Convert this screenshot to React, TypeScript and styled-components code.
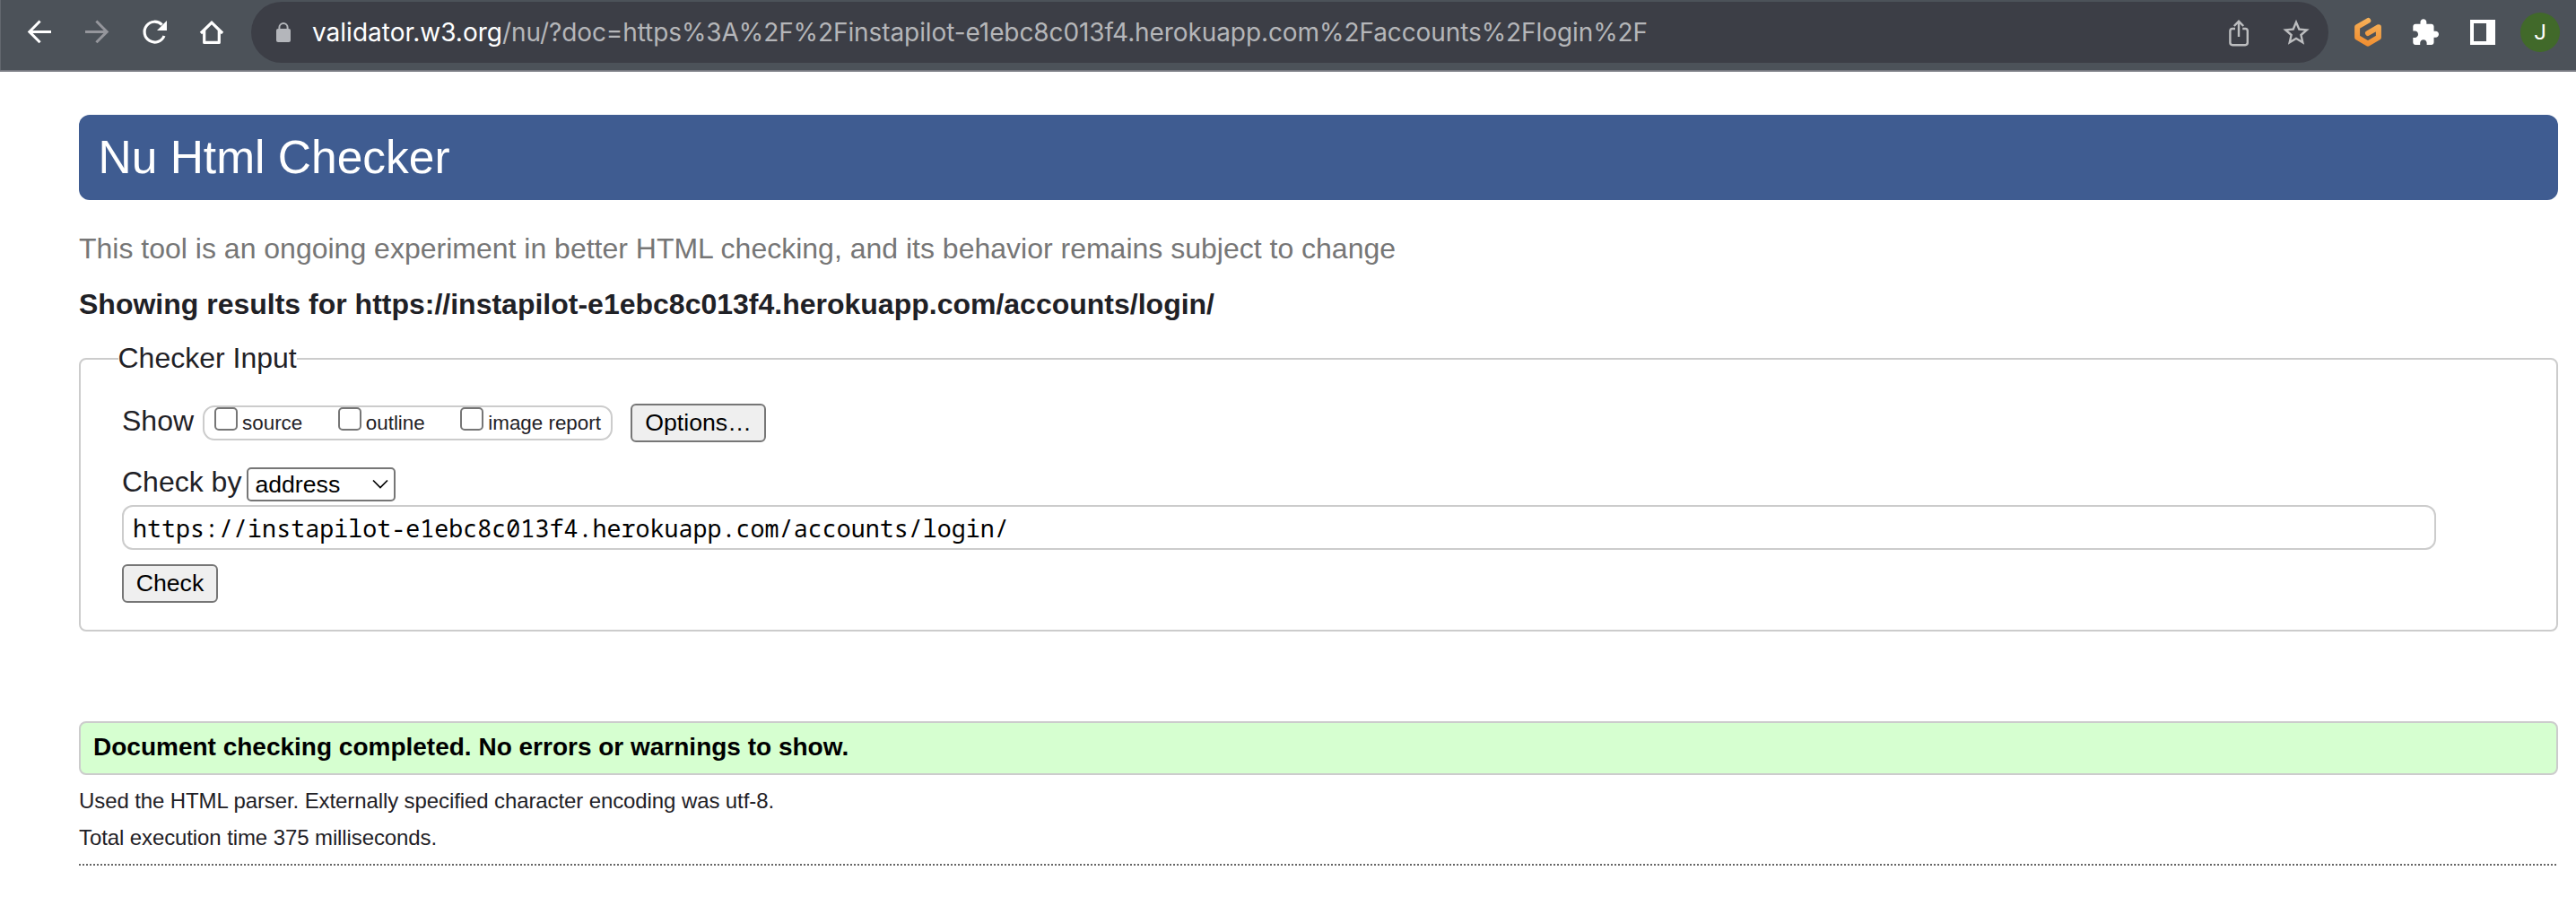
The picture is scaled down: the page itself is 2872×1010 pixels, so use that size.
import React from "react";
import styled, { createGlobalStyle } from "styled-components";

const sans = `"Liberation Sans", Arial, Helvetica, sans-serif`;
const ui = `Inter, Roboto, sans-serif`;
const mono = `"Noto Sans Mono", "DejaVu Sans Mono", monospace`;

const GlobalStyle = createGlobalStyle`
  *, *::before, *::after { box-sizing: border-box; }
  body { margin: 0; background: #fff; color: #1f2126; font-family: ${sans}; }
`;

/* Browser toolbar */

const Toolbar = styled.header`
  display: flex;
  align-items: center;
  height: 80px;
  padding: 2px 18px 8px 24px;
  background: #4c5259;
  border-bottom: 2px solid #777981;
  box-shadow: inset 1px 0 0 #62676e;
`;

const IconGroup = styled.div`
  display: flex;
  align-items: center;
  gap: 24px;
`;

const Glyph = styled.svg<{ $color?: string }>`
  flex: none;
  display: block;
  width: 40px;
  height: 40px;
  color: ${(p) => p.$color ?? "#fff"};
`;

const Omnibox = styled.div`
  flex: 1;
  display: flex;
  align-items: center;
  height: 68px;
  margin: 0 24px;
  padding: 0 16px;
  border-radius: 34px;
  background: #3c3e46;
`;

const Url = styled.div`
  flex: 1;
  margin-left: 12px;
  font: 28px/40px ${ui};
  letter-spacing: -0.09px;
  color: #b5b6b9;
  white-space: nowrap;
`;

const Host = styled.span`
  letter-spacing: 0;
  color: #fff;
`;

const Avatar = styled.div`
  display: flex;
  align-items: center;
  justify-content: center;
  width: 44px;
  height: 44px;
  margin-left: 22px;
  border-radius: 50%;
  background: #41692a;
  color: #fff;
  font: 24px/44px Roboto, sans-serif;
`;

/* Page */

const Page = styled.main`
  display: flex;
  flex-direction: column;
  padding: 48px 20px 0 88px;
`;

const Banner = styled.h1`
  margin: 0;
  height: 95px;
  padding: 0 21.5px;
  border-radius: 12px;
  background: #3f5c91;
  color: #fff;
  font-size: 51.5px;
  font-weight: 400;
  line-height: 94px;
`;

const Notice = styled.p`
  margin: 36px 0 0;
  font-size: 32px;
  line-height: 36px;
  color: #767676;
`;

const ResultsTitle = styled.h2`
  margin: 26px 0 0;
  font-size: 32px;
  line-height: 36px;
`;

const Panel = styled.fieldset`
  min-width: 0;
  height: 323px;
  margin: 24px 0 0;
  padding: 0;
  border: 2px solid #ccc;
  border-radius: 8px;
`;

const PanelTitle = styled.legend`
  margin-left: 41.5px;
  padding: 0 0 2px;
  font-size: 32px;
  line-height: 36px;
`;

const PanelBody = styled.div`
  display: flex;
  flex-direction: column;
  align-items: flex-start;
  padding: 31px 134px 0 46px;
`;

const Row = styled.div<{ $top?: number }>`
  display: flex;
  align-items: center;
  margin-top: ${(p) => p.$top ?? 0}px;
`;

const RowLabel = styled.span<{ $gap: number }>`
  margin-right: ${(p) => p.$gap}px;
  padding-bottom: 5px;
  font-size: 32px;
  line-height: 33px;
  white-space: nowrap;
`;

const CheckGroup = styled.div`
  display: flex;
  gap: 39.5px;
  width: 457px;
  height: 39px;
  padding-left: 11px;
  margin-right: 20px;
  border: 2px solid #ccc;
  border-radius: 13px;
`;

const CheckLabel = styled.label`
  display: flex;
  gap: 5px;
  font-size: 22.4px;
  line-height: 35px;
  white-space: nowrap;
`;

const CheckBox = styled.input`
  appearance: none;
  width: 26px;
  height: 26px;
  margin: 0;
  border: 2px solid #767676;
  border-radius: 5px;
  background: #fff;
`;

const Button = styled.button<{ $width: number; $top?: number }>`
  width: ${(p) => p.$width}px;
  height: 43px;
  margin: ${(p) => p.$top ?? 0}px 0 0;
  padding: 0 0 1px;
  border: 2px solid #767676;
  border-radius: 6px;
  background: #efefef;
  color: #000;
  font: 26.67px/38px ${sans};
`;

const SelectWrap = styled.div`
  display: grid;
  align-items: center;
  width: 166px;
  height: 38px;

  & > * {
    grid-area: 1 / 1;
  }
`;

const Select = styled.select`
  appearance: none;
  width: 100%;
  height: 38px;
  padding: 0 0 0 7px;
  border: 2px solid #767676;
  border-radius: 5px;
  background: #fff;
  color: #000;
  font: 26.67px/34px ${sans};
`;

const Chevron = styled.svg`
  justify-self: end;
  width: 18px;
  height: 12px;
  margin-right: 8px;
  pointer-events: none;
`;

const AddressInput = styled.input`
  width: 100%;
  height: 50px;
  margin: 4px 0 0;
  padding: 0 10px;
  border: 2px solid #ccc;
  border-radius: 12px;
  background: #fff;
  color: #000;
  font: 26.67px/46px ${mono};
  letter-spacing: 0.02px;
`;

const Success = styled.p`
  height: 60px;
  margin: 100px 0 0;
  padding: 0 14px;
  border: 2px solid #ccc;
  border-radius: 8px;
  background: #d6ffd0;
  color: #000;
  font-size: 28px;
  font-weight: 700;
  line-height: 54px;
`;

const Detail = styled.p<{ $top: number }>`
  margin: ${(p) => p.$top}px 0 0;
  font-size: 24px;
  line-height: 30px;
  letter-spacing: -0.1px;
`;

const Divider = styled.div`
  height: 2px;
  margin-top: 14px;
  background: repeating-linear-gradient(90deg, #666 0 2px, transparent 2px 4px);
`;

const checks = ["source", "outline", "image report"];

const BackIcon = () => (
  <Glyph viewBox="0 0 40 40" fill="none" stroke="currentColor" strokeWidth="3">
    <path d="M33 19.4H9M20.6 7.5L8.8 19.4l11.8 11.9" />
  </Glyph>
);

const ForwardIcon = () => (
  <Glyph viewBox="0 0 40 40" fill="none" stroke="currentColor" strokeWidth="3" $color="#95969c">
    <path d="M7 19.4h24M19.4 7.5l11.8 11.9-11.8 11.9" />
  </Glyph>
);

const ReloadIcon = () => (
  <Glyph viewBox="0 0 40 40">
    <path
      d="M28.6 11.6A11.4 11.4 0 1 0 31 24"
      fill="none"
      stroke="currentColor"
      strokeWidth="3.2"
    />
    <path d="M34 7v11H23z" fill="currentColor" />
  </Glyph>
);

const HomeIcon = () => (
  <Glyph viewBox="0 0 40 40" fill="none" stroke="currentColor" strokeWidth="3.2">
    <path d="M7.9 21L20 9.2 32.1 21" />
    <path d="M11.7 18v13.4h16.6V18" strokeLinejoin="round" />
  </Glyph>
);

const LockIcon = () => (
  <Glyph viewBox="0 0 40 40" $color="#b4b6bb">
    <rect x="12" y="16" width="16" height="15" rx="2" fill="currentColor" />
    <path d="M15.4 17v-2.4a4.6 4.6 0 0 1 9.2 0V17" fill="none" stroke="currentColor" strokeWidth="2" />
  </Glyph>
);

const ShareIcon = () => (
  <Glyph viewBox="0 0 40 40" fill="none" stroke="currentColor" strokeWidth="2.4" $color="#bcbdbf">
    <path d="M16 16h-3a2.6 2.6 0 0 0-2.6 2.6v13A2.6 2.6 0 0 0 13 34.2h14.2a2.6 2.6 0 0 0 2.6-2.6v-13a2.6 2.6 0 0 0-2.6-2.6h-3" />
    <path d="M20 25V8.5M14.8 13L20 7.8l5.2 5.2" />
  </Glyph>
);

const StarIcon = () => (
  <Glyph viewBox="-1.6 -1.95 27.2 27.2" fill="currentColor" $color="#bcbdbf">
    <path d="M22 9.24l-7.19-.62L12 2 9.19 8.63 2 9.24l5.46 4.73L5.82 21 12 17.27 18.18 21l-1.63-7.03L22 9.24zM12 15.4l-3.76 2.27 1-4.28-3.32-2.88 4.38-.38L12 6.1l1.71 4.04 4.38.38-3.32 2.88 1 4.28L12 15.4z" />
  </Glyph>
);

const GitpodIcon = () => (
  <Glyph viewBox="0 0 40 40">
    <defs>
      <linearGradient id="gitpod" gradientUnits="userSpaceOnUse" x1="24" y1="4" x2="16" y2="36">
        <stop offset="0" stopColor="#f6b35c" />
        <stop offset="1" stopColor="#f08c2e" />
      </linearGradient>
    </defs>
    <path
      d="M20.3 7L8.1 14v11.700L20 32.700l11.900-7V14.200L20 21"
      fill="none"
      stroke="url(#gitpod)"
      strokeWidth="6"
      strokeLinecap="round"
      strokeLinejoin="round"
    />
  </Glyph>
);

const ExtensionsIcon = () => (
  <Glyph viewBox="-2.6 -2.8 29.26 29.26" fill="currentColor">
    <path d="M20.5 11H19V7c0-1.1-.9-2-2-2h-4V3.5C13 2.12 11.88 1 10.5 1S8 2.12 8 3.5V5H4c-1.1 0-1.99.9-1.99 2v3.8H3.5c1.49 0 2.7 1.21 2.7 2.7s-1.21 2.7-2.7 2.7H2V20c0 1.1.9 2 2 2h3.8v-1.5c0-1.49 1.21-2.7 2.7-2.7 1.49 0 2.7 1.21 2.7 2.7V22H17c1.1 0 2-.9 2-2v-4h1.5c1.38 0 2.5-1.12 2.5-2.5S21.88 11 20.5 11z" />
  </Glyph>
);

const SidePanelIcon = () => (
  <Glyph viewBox="0 0 40 40">
    <path d="M6 6h28v28H6zM10 10v20h14V10z" fill="currentColor" fillRule="evenodd" />
  </Glyph>
);

export default function App() {
  return (
    <>
      <GlobalStyle />
      <Toolbar>
        <IconGroup>
          <BackIcon />
          <ForwardIcon />
          <ReloadIcon />
          <HomeIcon />
        </IconGroup>
        <Omnibox>
          <LockIcon />
          <Url>
            <Host>validator.w3.org</Host>
            /nu/?doc=https%3A%2F%2Finstapilot-e1ebc8c013f4.herokuapp.com%2Faccounts%2Flogin%2F
          </Url>
          <IconGroup>
            <ShareIcon />
            <StarIcon />
          </IconGroup>
        </Omnibox>
        <IconGroup>
          <GitpodIcon />
          <ExtensionsIcon />
          <SidePanelIcon />
        </IconGroup>
        <Avatar>J</Avatar>
      </Toolbar>
      <Page>
        <Banner>Nu Html Checker</Banner>
        <Notice>
          This tool is an ongoing experiment in better HTML checking, and its behavior remains
          subject to change
        </Notice>
        <ResultsTitle>
          Showing results for https://instapilot-e1ebc8c013f4.herokuapp.com/accounts/login/
        </ResultsTitle>
        <Panel>
          <PanelTitle>Checker Input</PanelTitle>
          <PanelBody>
            <Row>
              <RowLabel $gap={10}>Show</RowLabel>
              <CheckGroup>
                {checks.map((name) => (
                  <CheckLabel key={name}>
                    <CheckBox type="checkbox" />
                    {name}
                  </CheckLabel>
                ))}
              </CheckGroup>
              <Button type="button" $width={151}>
                Options…
              </Button>
            </Row>
            <Row $top={28}>
              <RowLabel $gap={6}>Check by</RowLabel>
              <SelectWrap>
                <Select defaultValue="address">
                  <option value="address">address</option>
                </Select>
                <Chevron viewBox="0 0 18 12" fill="none" stroke="#000" strokeWidth="1.7">
                  <path d="M1 1.5l8 8 8-8" />
                </Chevron>
              </SelectWrap>
            </Row>
            <AddressInput
              type="text"
              spellCheck={false}
              defaultValue="https://instapilot-e1ebc8c013f4.herokuapp.com/accounts/login/"
            />
            <Button type="button" $width={107} $top={16}>
              Check
            </Button>
          </PanelBody>
        </Panel>
        <Success>Document checking completed. No errors or warnings to show.</Success>
        <Detail $top={14}>
          Used the HTML parser. Externally specified character encoding was utf-8.
        </Detail>
        <Detail $top={11}>Total execution time 375 milliseconds.</Detail>
        <Divider />
      </Page>
    </>
  );
}
